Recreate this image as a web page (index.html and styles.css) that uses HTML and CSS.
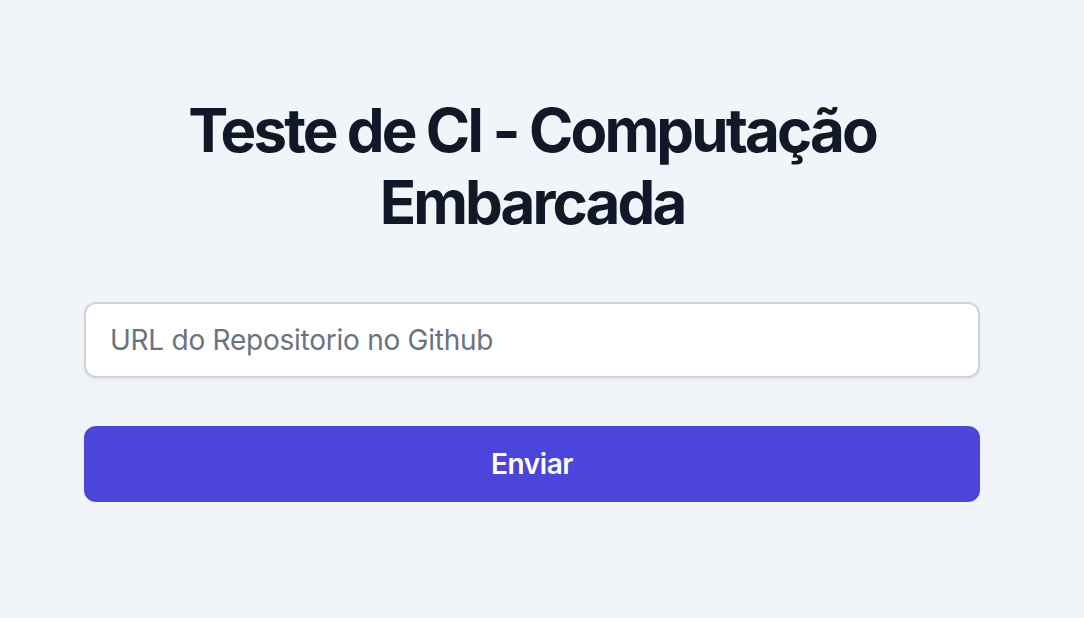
FILE: index.html
```html
<!DOCTYPE html>
<html lang="pt">
<head>
<meta charset="utf-8">
<title>Teste de CI - Computação Embarcada</title>
<link rel="stylesheet" href="styles.css">
</head>
<body>
<main class="page">
  <div class="card">
    <h2 class="title">Teste de CI - Computação Embarcada</h2>
    <form class="form">
      <input class="field" type="text" placeholder="URL do Repositorio no Github">
      <button class="submit" type="button">Enviar</button>
    </form>
  </div>
</main>
</body>
</html>
```
FILE: styles.css
```css
* { box-sizing: border-box; }
html, body {
  margin: 0;
  padding: 0;
  background: #f1f4f9;
  font-family: Inter, "Noto Sans", "Liberation Sans", sans-serif;
}
.page {
  min-height: 618px;
  display: flex;
  justify-content: center;
  padding: 94px 20px 0 0;
}
.card {
  width: 896px;
  display: flex;
  flex-direction: column;
}
.title {
  margin: 0;
  text-align: center;
  font-size: 60px;
  line-height: 72px;
  font-weight: 700;
  letter-spacing: -2.9px;
  color: #111827;
}
.form {
  margin-top: 64px;
  display: flex;
  flex-direction: column;
  gap: 48px;
}
.field {
  display: block;
  width: 100%;
  height: 76px;
  padding: 16px 24px;
  border: 2px solid #d1d5db;
  border-radius: 12px;
  background: #fff;
  font-family: inherit;
  font-size: 28px;
  line-height: 40px;
  letter-spacing: -0.25px;
  color: #111827;
  box-shadow: 0 2px 4px rgba(0,0,0,0.05);
  outline: none;
}
.field::placeholder { color: #6b7280; }
.submit {
  display: block;
  width: 100%;
  height: 76px;
  border: 2px solid transparent;
  border-radius: 12px;
  background: #4c45db;
  color: #fff;
  font-family: inherit;
  font-size: 28px;
  line-height: 40px;
  font-weight: 600;
  letter-spacing: -0.4px;
  cursor: pointer;
}
```
